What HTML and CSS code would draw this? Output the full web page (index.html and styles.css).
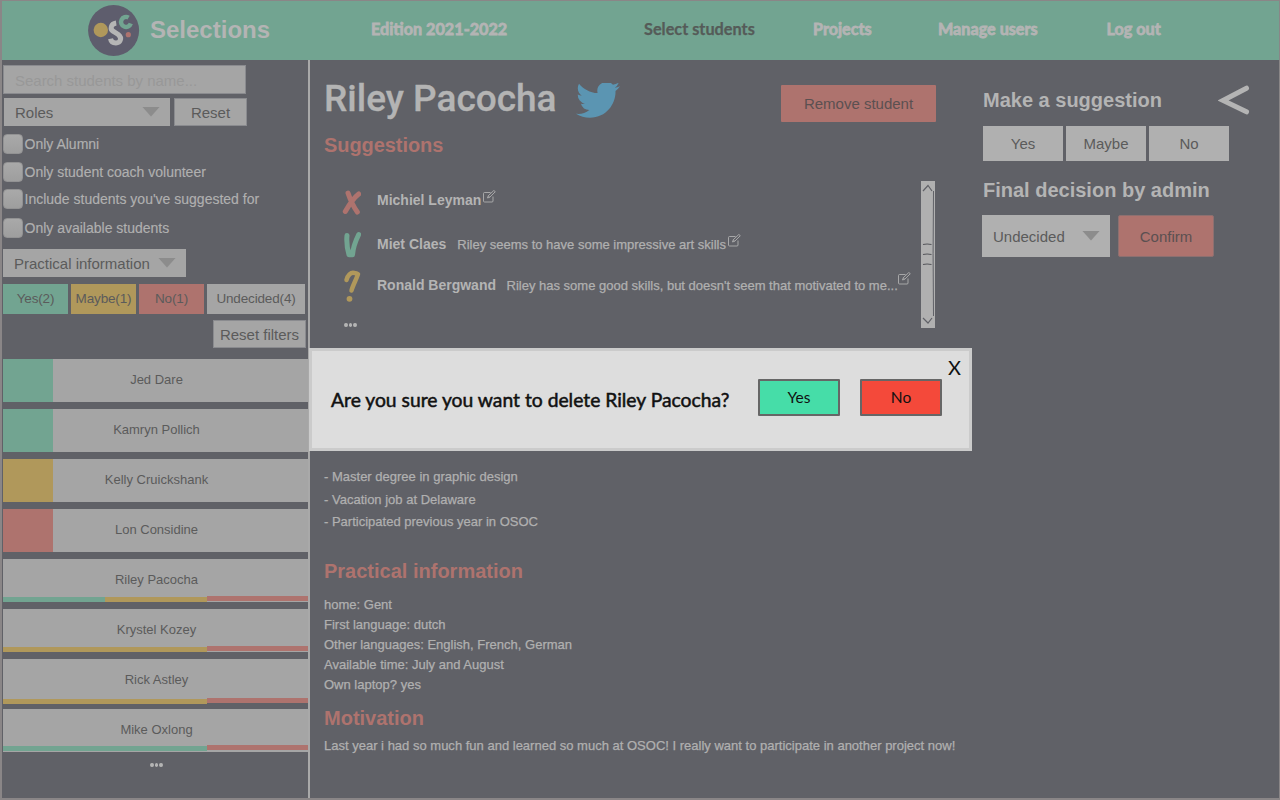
FILE: index.html
```html
<!DOCTYPE html>
<html lang="en">
<head>
<meta charset="utf-8">
<title>Selections</title>
<link rel="stylesheet" href="styles.css">
</head>
<body>
<svg class="defs" width="0" height="0">
  <symbol id="edit" viewBox="0 0 13 13"><path d="M7.500 2.500H1.500a1 1 0 0 0-1 1v7.500a1 1 0 0 0 1 1h7.500a1 1 0 0 0 1-1V6.500M4.500 8l.8-2.300L10.800.5l1.500 1.200-5.500 5.500zM5.200 5.800l1.500 1.300" fill="none" stroke="currentColor" stroke-width=".85"/></symbol>
</svg>
<div class="app">
  <header class="topbar">
    <svg class="logo" viewBox="0 0 52 52" width="52" height="52">
      <circle cx="25.600" cy="25.500" r="25.500" fill="#5e5d6d"/>
      <circle cx="12.800" cy="25" r="7.200" fill="#b0985b"/>
      <path d="M28.200 18C22.500 18.800 21.800 24.300 25.500 26.500L30.200 29.500C34.800 33.300 32 38.100 27.800 38C24.600 38 23 36.300 22.500 33.800" fill="none" stroke="#b5b5b5" stroke-width="5"/>
      <path d="M40.600 12.600A5 5 0 1 0 42.800 18.500" fill="none" stroke="#72a491" stroke-width="4.400"/>
      <circle cx="40.300" cy="29.700" r="2.600" fill="#ae736e"/>
    </svg>
    <h1 class="brand">Selections</h1>
    <nav class="nav">
      <a class="nav-edition">Edition 2021-2022</a>
      <a class="nav-students active">Select students</a>
      <a class="nav-projects">Projects</a>
      <a class="nav-users">Manage users</a>
      <a class="nav-logout">Log out</a>
    </nav>
  </header>
  <div class="body">
    <aside class="sidebar">
      <div class="search">Search students by name...</div>
      <div class="row roles-row">
        <div class="select roles"><span>Roles</span><i class="caret"></i></div>
        <div class="btn reset">Reset</div>
      </div>
      <div class="checks">
        <label class="check c1"><i class="box"></i>Only Alumni</label>
        <label class="check c2"><i class="box"></i>Only student coach volunteer</label>
        <label class="check c3"><i class="box"></i>Include students you've suggested for</label>
        <label class="check c4"><i class="box"></i>Only available students</label>
      </div>
      <div class="select practical"><span>Practical information</span><i class="caret"></i></div>
      <div class="row tabs">
        <div class="tab green">Yes(2)</div>
        <div class="tab yellow">Maybe(1)</div>
        <div class="tab red">No(1)</div>
        <div class="tab wide">Undecided(4)</div>
      </div>
      <div class="btn reset-filters">Reset filters</div>
      <ul class="students">
        <li class="student"><i class="flag green"></i>Jed Dare</li>
        <li class="student"><i class="flag green"></i>Kamryn Pollich</li>
        <li class="student"><i class="flag yellow"></i>Kelly Cruickshank</li>
        <li class="student"><i class="flag red"></i>Lon Considine</li>
        <li class="student">Riley Pacocha<div class="votes"><i class="green"></i><i class="yellow"></i><i class="red"></i></div></li>
        <li class="student">Krystel Kozey<div class="votes"><i class="yellow"></i><i class="yellow"></i><i class="red"></i></div></li>
        <li class="student">Rick Astley<div class="votes low"><i class="yellow"></i><i class="yellow"></i><i class="red"></i></div></li>
        <li class="student">Mike Oxlong<div class="votes high"><i class="green"></i><i class="green"></i><i class="red"></i></div></li>
      </ul>
      <div class="dots side-dots"><i></i><i></i><i></i></div>
    </aside>
    <main class="detail">
      <div class="title-row">
        <h2 class="name">Riley Pacocha</h2>
        <svg class="bird" viewBox="0 2.800 24 19.600" width="44" height="36" preserveAspectRatio="none"><path fill="#5b95b2" d="M23.953 4.570a10 10 0 01-2.825.775 4.958 4.958 0 002.163-2.723c-.951.555-2.005.959-3.127 1.184a4.920 4.920 0 00-8.384 4.482C7.690 8.095 4.067 6.130 1.640 3.162a4.822 4.822 0 00-.666 2.475c0 1.710.870 3.213 2.188 4.096a4.904 4.904 0 01-2.228-.616v.060a4.923 4.923 0 003.946 4.827 4.996 4.996 0 01-2.212.085 4.936 4.936 0 004.604 3.417 9.867 9.867 0 01-6.102 2.105c-.390 0-.779-.023-1.170-.067a13.995 13.995 0 007.557 2.209c9.053 0 13.998-7.496 13.998-13.985 0-.210 0-.420-.015-.630A9.935 9.935 0 0024 4.590z"/></svg>
        <div class="remove">Remove student</div>
      </div>
      <h3 class="heading h-sugg">Suggestions</h3>
      <section class="suggestions">
        <div class="entries">
          <div class="entry">
            <svg class="mark" viewBox="0 0 20 34" width="20" height="34"><path d="M7 8C9 14 12 21 16.300 27M17.700 9C12.500 13 8 20 4.300 26.500" fill="none" stroke="#ae736e" stroke-width="5" stroke-linecap="round"/></svg>
            <b class="who">Michiel Leyman</b><svg class="edit e1" width="13" height="13"><use href="#edit"/></svg>
          </div>
          <div class="entry">
            <svg class="mark" viewBox="0 0 20 34" width="20" height="34"><path d="M6 8.500C5.500 14 6.300 22 8 27.800H11.500C12 21 15 13 17.700 7.500" fill="none" stroke="#72a491" stroke-width="5" stroke-linecap="round" stroke-linejoin="round"/></svg>
            <b class="who w2">Miet Claes</b><span class="comment cm2">Riley seems to have some impressive art skills</span><svg class="edit e2" width="13" height="13"><use href="#edit"/></svg>
          </div>
          <div class="entry">
            <svg class="mark" viewBox="0 0 20 34" width="20" height="34"><path d="M5.500 11C6.500 6.500 10 3 13 3.800C14.500 4.300 15.800 4.600 17 5.200C15.500 10 12 16 10.500 21.500" fill="none" stroke="#b0985b" stroke-width="4.500" stroke-linecap="round" stroke-linejoin="round"/><circle cx="8.500" cy="29.800" r="2.900" fill="#b0985b"/></svg>
            <b class="who w3">Ronald Bergwand</b><span class="comment cm3">Riley has some good skills, but doesn't seem that motivated to me...</span><svg class="edit e3" width="13" height="13"><use href="#edit"/></svg>
          </div>
          <div class="dots entry-dots"><i></i><i></i><i></i></div>
        </div>
        <svg class="scroll" viewBox="0 0 14 147" width="14" height="147"><path d="M0 0H14V147H0z" fill="#b0b0b0"/><path d="M12.500 10Q11.700 73 12.500 135" fill="none" stroke="#606167"/><path d="M2 10L7 4.500L11 10M2 137L7 142L11 137" fill="none" stroke="#606167" stroke-width="1.200"/><path d="M2 63.500Q6 62.500 10.500 63.500M2 73.500Q6 72.500 10.500 73.500M2 83.500Q6 82.500 10.500 83.500" fill="none" stroke="#55565b" stroke-width="1.200"/></svg>
      </section>
      <ul class="facts experience">
        <li>- Master degree in graphic design</li>
        <li>- Vacation job at Delaware</li>
        <li>- Participated previous year in OSOC</li>
      </ul>
      <h3 class="heading h-prac">Practical information</h3>
      <ul class="facts info">
        <li>home: Gent</li>
        <li>First language: dutch</li>
        <li>Other languages: English, French, German</li>
        <li>Available time: July and August</li>
        <li>Own laptop? yes</li>
      </ul>
      <h3 class="heading h-mot">Motivation</h3>
      <p class="facts motivation">Last year i had so much fun and learned so much at OSOC! I really want to participate in another project now!</p>
    </main>
    <section class="decide">
      <div class="decide-head">
        <h3 class="panel-title">Make a suggestion</h3>
        <svg class="back" viewBox="0 0 32 30" width="32" height="30"><path d="M28.500 3.200L5 15.500L28.500 26.800" fill="none" stroke="#b4b4b4" stroke-width="5" stroke-linecap="round"/></svg>
      </div>
      <div class="row choices">
        <div class="choice">Yes</div><div class="choice">Maybe</div><div class="choice">No</div>
      </div>
      <h3 class="panel-title final">Final decision by admin</h3>
      <div class="row admin">
        <div class="select decision"><span>Undecided</span><i class="caret"></i></div>
        <div class="confirm">Confirm</div>
      </div>
    </section>
  </div>
  <div class="dialog">
    <p class="question">Are you sure you want to delete Riley Pacocha?</p>
    <div class="answer yes">Yes</div>
    <div class="answer no">No</div>
    <span class="close">X</span>
  </div>
</div>
</body>
</html>
```

FILE: styles.css
```css
* { box-sizing: border-box; margin: 0; padding: 0; }
body { width: 1280px; height: 800px; overflow: hidden; font-family: "Liberation Sans", Arial, sans-serif; color: #b4b4b4; }
ul { list-style: none; }
.defs { display: block; }
.app { position: relative; width: 1280px; height: 800px; background: #606167; border: solid #8a8687; border-width: 1px 1px 2px 2px; }
.green { background: #72a491; }
.yellow { background: #b0985b; }
.red { background: #ae736e; }
.row { display: flex; }

.topbar { display: flex; align-items: center; height: 59px; background: #72a491; padding-left: 86px; }
.logo { flex: none; }
.brand { margin: -2px 0 0 10px; width: 221px; font-size: 24px; line-height: 30px; }
.nav { display: flex; margin-top: -3px; font: 700 16.200px/24px Lato, sans-serif; white-space: nowrap; -webkit-text-stroke: .8px #b4b4b4; }
.nav-edition { width: 273px; }
.nav-students { width: 169px; }
.nav-projects { width: 125px; }
.nav-users { width: 168.500px; }
.nav .active { color: #555b58; font-size: 16.300px; -webkit-text-stroke: .25px #555b58; }

.body { display: flex; height: 738px; }
.sidebar { flex: none; width: 308px; padding: 5px 0 0 1px; border-right: 2px solid #a9a9a9; }
.search { width: 243px; height: 29px; border: 1px solid #8a8b8f; background: #a5a5a5; color: #989898; font-size: 15px; line-height: 30px; letter-spacing: -.02px; padding-left: 11px; }
.select { display: flex; align-items: center; justify-content: space-between; background: #a5a5a5; color: #5b5b5b; font-size: 15px; padding: 0 10px 0 11px; }
.caret { width: 18px; height: 10px; background: #8c8c8c; clip-path: polygon(0 0, 100% 0, 50% 100%); }
.select span { padding-top: 1px; }
.select .caret { margin-top: -1px; }
.btn { display: flex; align-items: center; justify-content: center; background: #a5a5a5; border: 1px solid #8a8b8f; color: #5b5b5b; font-size: 15px; }
.roles-row { gap: 4px; margin: 4px 0 0 1px; }
.roles { width: 166px; height: 28px; }
.reset { width: 73px; height: 28px; padding-top: 1px; }
.checks { padding: 8px 0 0 0; }
.check { display: flex; align-items: center; gap: 1.500px; height: 19px; font-size: 14px; color: #b0b0b0; -webkit-text-stroke: .15px #b0b0b0; }
.box { flex: none; width: 20px; height: 20px; border: 1px solid #929293; border-radius: 4px; background: linear-gradient(#a9a9a9, #9e9e9e); }
.c2 { margin-top: 9px; }
.c3 { margin-top: 8px; }
.c4 { margin-top: 10px; }
.practical { width: 183px; height: 28px; margin-top: 12px; }
.tabs { gap: 3px; margin-top: 7px; }
.tab { display: flex; align-items: center; justify-content: center; width: 65px; height: 30px; padding-bottom: 1px; color: #5b5b5b; font-size: 13.500px; letter-spacing: -.15px; }
.wide { width: 98px; background: #a5a5a5; }
.reset-filters { width: 93px; height: 28px; margin: 6px 0 0 210px; padding-top: 1px; }
.students { display: grid; gap: 7px; margin-top: 11px; }
.student { position: relative; height: 43px; background: #a5a5a5; color: #5b5b5b; font-size: 13px; line-height: 41px; text-align: center; padding-left: 2px; }
.flag { position: absolute; left: 0; top: 0; width: 50px; height: 43px; }
.votes { position: absolute; left: 0; bottom: 0; display: grid; grid-template-columns: 102px 102px 101px; width: 305px; }
.votes i { height: 5px; }
.votes .red { position: relative; top: -1px; }
.low { bottom: -2px; }
.high { bottom: 1px; }
.dots { display: flex; gap: 1px; }
.dots i { width: 3.500px; height: 4px; border-radius: 50%; background: #b4b4b4; }
.side-dots { margin: 11px 0 0 147px; }

.detail { flex: none; width: 672px; padding-left: 14px; }
.title-row { display: flex; align-items: center; height: 64px; margin-top: 6px; }
.name { width: 252px; margin-top: 2px; font: 500 37px/46px Roboto, sans-serif; white-space: nowrap; -webkit-text-stroke: .3px #b4b4b4; }
.bird { margin-top: 6px; }
.remove { width: 155px; height: 37px; margin: 11px 0 0 161px; background: #ae736e; color: #5b5051; font-size: 15px; line-height: 38px; text-align: center; border-radius: 1px; }
.heading { height: 30px; font-size: 20px; line-height: 30px; color: #ae736e; }
.h-sugg { letter-spacing: -.07px; }
.suggestions { display: flex; height: 170px; padding-top: 21px; }
.entries { width: 597px; }
.entry { display: flex; align-items: center; height: 42px; padding-left: 17px; white-space: nowrap; }
.mark { flex: none; margin-right: 16px; }
.who { font-size: 14px; line-height: 18px; margin-top: -4px; }
.w2 { margin-top: 0; }
.w3 { margin-top: -3px; }
.comment { font-size: 13px; line-height: 18px; color: #b0b0b0; -webkit-text-stroke: .25px #b0b0b0; }
.cm2 { margin: 2px 0 0 11px; }
.cm3 { margin: 0 0 0 10.500px; }
.edit { flex: none; margin: -11px 0 0 2px; color: #b4b4b4; }
.e2 { margin-top: -8px; }
.e3 { margin: -16px 0 0; }
.entry-dots { margin: 16px 0 0 20px; }
.facts { font-size: 13px; color: #b0b0b0; -webkit-text-stroke: .25px #b0b0b0; white-space: nowrap; letter-spacing: .004px; }
.experience { margin-top: 136px; line-height: 22.500px; }
.h-prac { margin-top: 22px; }
.info { margin-top: 9px; line-height: 20.200px; }
.h-mot { margin-top: 7px; }
.motivation { line-height: 20px; margin-top: 3px; }

.decide-head { display: flex; height: 40px; margin-top: 20px; justify-content: space-between; width: 267px; }
.decide { padding-left: 1px; }
.panel-title { font-size: 20px; line-height: 40px; }
.back { margin-top: 5px; }
.choices { gap: 3px; margin-top: 6px; }
.choice { width: 80px; height: 35px; background: #b0b0b0; color: #5b5b5b; font-size: 15px; line-height: 36px; text-align: center; }
.final { height: 40px; margin-top: 9px; }
.admin { gap: 8px; margin: 5px 0 0 -1px; }
.decision { width: 128px; height: 42px; background: #b0b0b0; }
.confirm { width: 96px; height: 42px; border: 1px solid #8d7070; border-radius: 2px; background: #ae736e; color: #5b5051; font-size: 15px; line-height: 42px; text-align: center; }

.dialog { position: absolute; left: 307px; top: 347px; width: 663px; height: 103px; display: flex; border: 3px solid #cbcbcb; background: #ddd; color: #111; font-family: Lato, sans-serif; }
.question { width: 427px; padding: 34px 0 0 19px; font-size: 19.300px; line-height: 30px; font-weight: 400; white-space: nowrap; -webkit-text-stroke: .5px #111; }
.answer { width: 82px; height: 37px; margin: 28px 0 0 19px; border: 2px solid #666; border-radius: 1px; font-size: 15.500px; line-height: 33px; text-align: center; }
.yes { background: #46dda8; }
.no { background: #f4493a; margin-left: 20px; }
.close { margin: 2px 0 0 6px; font-size: 20px; line-height: 28px; }
```
